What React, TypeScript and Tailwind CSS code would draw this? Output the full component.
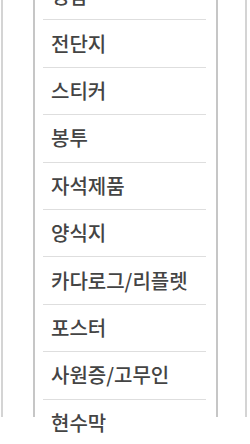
import React from "react";

const items = [
  "명함",
  "전단지",
  "스티커",
  "봉투",
  "자석제품",
  "양식지",
  "카다로그/리플렛",
  "포스터",
  "사원증/고무인",
  "현수막",
];

const App = () => {
  return (
    <div className="w-[250px] h-[444px] overflow-hidden bg-white">
      <div className="ml-px w-[246px] h-full border-x-2 border-[#d4d4d4]">
        <div className="ml-[30px] w-[185px] h-full border-x-2 border-[#c6c6c6]">
          <ul className="ml-2 mr-[10px] -mt-[27px]">
            {items.map((item) => (
              <li
                key={item}
                className="h-[47.4px] flex items-center pl-2 border-b border-[#dedede] text-[20px] font-medium text-[#444] leading-none"
                style={{ fontFamily: '"Noto Sans CJK KR", "Noto Sans", sans-serif' }}
              >
                {item}
              </li>
            ))}
          </ul>
        </div>
      </div>
    </div>
  );
};

export default App;
